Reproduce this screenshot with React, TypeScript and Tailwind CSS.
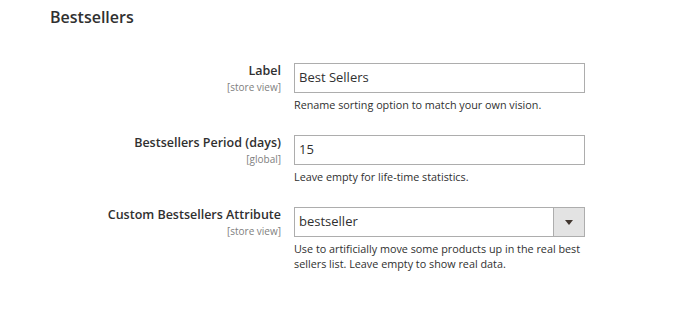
import React from "react";

function Row({
  label,
  scope,
  children,
  note,
}: {
  label: string;
  scope: string;
  children: React.ReactNode;
  note: React.ReactNode;
}) {
  return (
    <div className="flex">
      <div className="w-[244px] pr-[13px] text-right">
        <div className="text-[12.5px] leading-[16px] font-semibold text-[#303030]">{label}</div>
        <div className="text-[10px] leading-[12px] text-[#808080] mt-[2px]">{scope}</div>
      </div>
      <div className="w-[291px]">
        {children}
        <div className="mt-[4px] text-[10.8px] leading-[15px] text-[#303030]">{note}</div>
      </div>
    </div>
  );
}

export default function App() {
  return (
    <div
      className="w-[685px] h-[314px] bg-white pl-[50px] pt-[7px]"
      style={{ fontFamily: '"Open Sans", sans-serif' }}
    >
      <h2 className="text-[16px] leading-[20px] font-semibold text-[#303030]">Bestsellers</h2>
      <div className="mt-[36px] flex flex-col gap-[23px]">
        <Row label="Label" scope="[store view]" note="Rename sorting option to match your own vision.">
          <div className="h-[30px] border border-[#adadad] bg-white flex items-center px-[4px] text-[13px] text-[#303030]">
            Best Sellers
          </div>
        </Row>
        <Row label="Bestsellers Period (days)" scope="[global]" note="Leave empty for life-time statistics.">
          <div className="h-[30px] border border-[#adadad] bg-white flex items-center px-[4px] text-[13px] text-[#303030]">
            15
          </div>
        </Row>
        <Row
          label="Custom Bestsellers Attribute"
          scope="[store view]"
          note="Use to artificially move some products up in the real best sellers list. Leave empty to show real data."
        >
          <div className="h-[30px] border border-[#adadad] bg-white flex items-stretch text-[13px] text-[#303030]">
            <div className="flex-1 flex items-center px-[4px]">bestseller</div>
            <div className="w-[31px] border-l border-[#adadad] bg-[#e3e3e3] flex items-center justify-center">
              <svg width="8" height="5" viewBox="0 0 8 5">
                <polygon points="0,0 8,0 4,5" fill="#41362f" />
              </svg>
            </div>
          </div>
        </Row>
      </div>
    </div>
  );
}
